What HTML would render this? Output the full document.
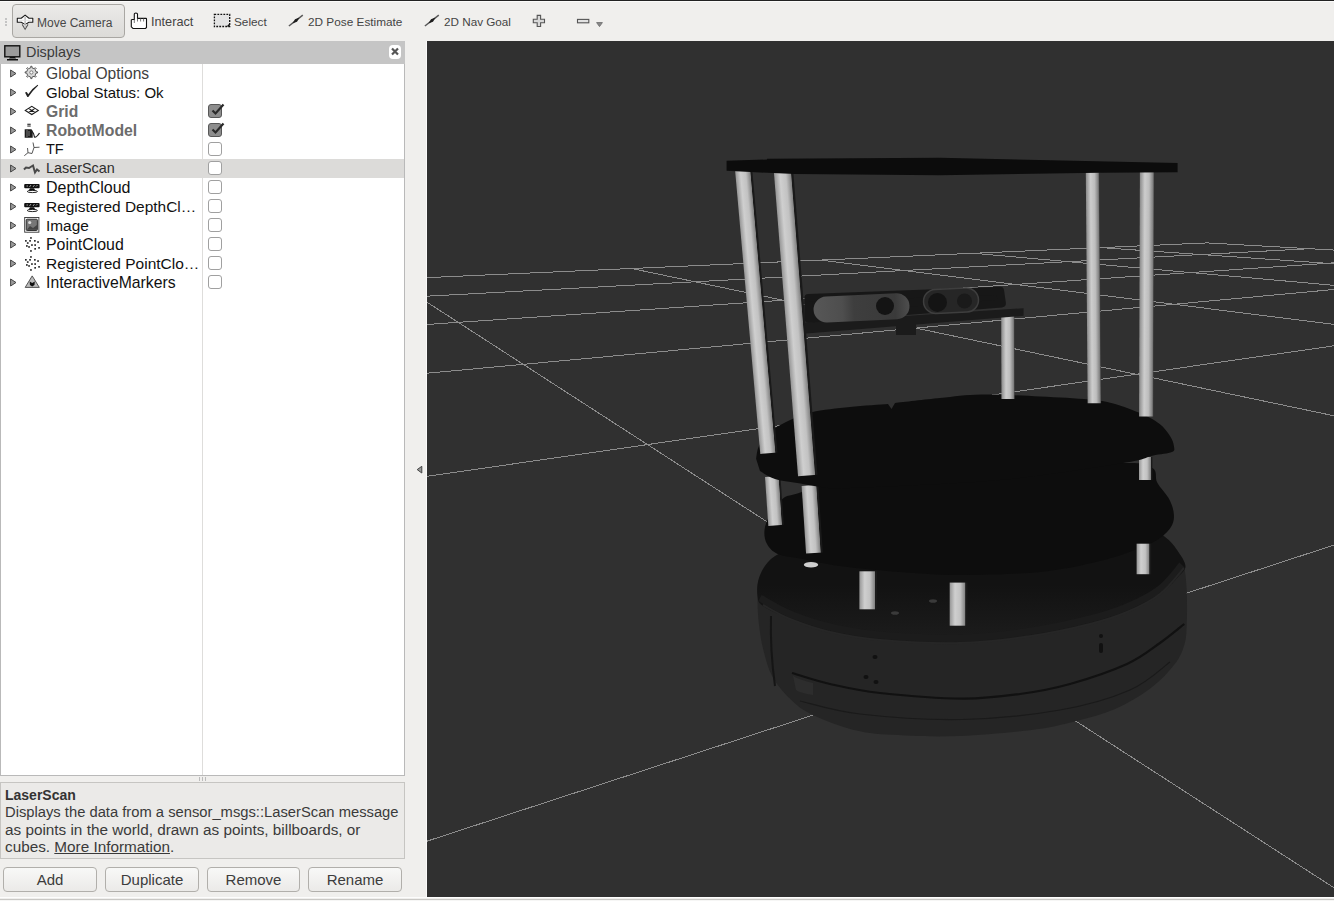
<!DOCTYPE html>
<html><head><meta charset="utf-8">
<style>
*{box-sizing:border-box;margin:0;padding:0}
html,body{width:1334px;height:901px;overflow:hidden;background:#f0efed;font-family:"Liberation Sans",sans-serif;color:#3c3c3c}
.abs{position:absolute}
#topline{left:0;top:0;width:1334px;height:1px;background:#222}
#topline2{left:0;top:1px;width:1334px;height:1px;background:#fbfbfa}
.tb{position:absolute;font-size:12px;color:#3c3c3c;white-space:nowrap;line-height:14px}
#mcbtn{left:12px;top:4px;width:113px;height:34px;border:1px solid #a9a7a3;border-radius:4px;background:linear-gradient(#ebeae8,#dcdbd8)}
#hdr{left:0;top:41px;width:405px;height:23px;background:#c5c5c5}
#tree{left:0;top:64px;width:405px;height:712px;background:#fff;border:1px solid #b9b9b9;border-top:none}
#coldiv{left:202px;top:64px;width:1px;height:711px;background:#dedddb}
.row{position:absolute;left:1px;width:403px;height:19px}
.lbl{position:absolute;left:45px;top:0.8px;font-size:15.2px;line-height:17px;color:#111;white-space:nowrap}
.arr{position:absolute;left:10px;top:5.5px;width:0;height:0;border-top:4px solid transparent;border-bottom:4px solid transparent;border-left:6.5px solid #555}
.cb{position:absolute;left:207px;top:2px;width:14px;height:14px;border:1px solid #a0a0a0;border-radius:3px;background:#fff}
.cb.on{background:#8d8d8d;border-color:#575757}
.ico{position:absolute;left:24px;top:2px;width:16px;height:16px}
.ico2{position:absolute;left:-1px;top:0}
#desc{left:0;top:782px;width:405px;height:77px;background:#ebeae8;border:1px solid #c6c5c2}
.dt{position:absolute;left:5px;font-size:14.75px;line-height:17px;color:#3a3a3a;white-space:nowrap}
.btn{position:absolute;top:867px;height:25px;border:1px solid #b1afab;border-radius:4px;background:linear-gradient(#f8f8f7,#ebeae8);font-size:15px;color:#3c3c3c;text-align:center;line-height:23px}
#view{left:427px;top:41px;width:907px;height:856px;background:#303030;overflow:hidden}
#status{left:0;top:897px;width:1334px;height:4px;background:#f0efed;border-top:1px solid #fdfdfd}
</style></head><body>
<div id="topline" class="abs"></div><div id="topline2" class="abs"></div>
<!-- toolbar -->
<div class="abs" style="left:5px;top:18px;width:2px;height:2px;background:#c4c4c4"></div>
<div class="abs" style="left:5px;top:21px;width:2px;height:2px;background:#c4c4c4"></div>
<div class="abs" style="left:5px;top:24px;width:2px;height:2px;background:#c4c4c4"></div>
<div id="mcbtn" class="abs"></div>
<svg class="abs" style="left:14px;top:10px" width="22" height="22" viewBox="14 10 22 22"><path d="M17.3 18.2 H21.2 L25.1 15.1 L29 18.2 H32.8 V22.3 H28.9 L25.1 24.6 L21.3 22.3 H17.3 Z" fill="#fff" stroke="#1a1a1a" stroke-width="1.1" stroke-linejoin="round"/><path d="M22.2 24.4 L25.1 29.2 L28 24.4" fill="#fff" stroke="#555" stroke-width="1.1"/><path d="M25.1 16.8 V27.5" stroke="#b0b0b0" stroke-width="1.2"/><path d="M18.8 20.25 H31.3" stroke="#e0e0e0" stroke-width="1"/></svg>
<div class="tb" style="left:37px;top:15.7px;color:#474747">Move Camera</div>
<svg class="abs" style="left:126px;top:8px" width="30" height="24" viewBox="0 0 30 24"><path d="M8.3 11.5 V6 Q8.3 5 9.9 5 Q11.5 5 11.5 6 V10.4 H20 Q20.5 10.4 20.5 11 V19.5 L19.5 20.5 H7 L5.3 18.8 V12 L6 11.5 Z" fill="#fff" stroke="#111" stroke-width="1.1"/><path d="M8.3 11.5 V15 M11.5 10.4 V13.5 M14.6 10.4 V13.5 M17.6 10.4 V13.5" stroke="#555" stroke-width="0.8"/></svg>
<div class="tb" style="left:151px;top:14.5px;font-size:12.7px;color:#444">Interact</div>
<svg class="abs" style="left:208px;top:8px" width="30" height="24" viewBox="0 0 30 24"><rect x="6.4" y="6.4" width="15.3" height="12.1" fill="#e4e4e4"/><rect x="6.4" y="6.4" width="15.3" height="12.1" fill="none" stroke="#111" stroke-width="1.3" stroke-dasharray="1.8 1.2"/><path d="M21.7 15.3 V18.5 H18.5 Z" fill="#111"/></svg>
<div class="tb" style="left:234px;top:15px;font-size:11.8px;color:#444">Select</div>
<svg class="abs" style="left:282px;top:6px" width="30" height="24" viewBox="0 0 30 24"><path d="M6.9 20 L20.8 9.1" stroke="#5a5a5a" stroke-width="1.5"/><path d="M17.6 11.6 L15.0 15.76 L10.4 17.4 L13.0 13.24 Z" fill="#1e1e1e"/></svg>
<div class="tb" style="left:308px;top:15px;font-size:11.8px;color:#444">2D Pose Estimate</div>
<svg class="abs" style="left:418px;top:6px" width="30" height="24" viewBox="0 0 30 24"><path d="M6.9 20 L20.8 9.1" stroke="#5a5a5a" stroke-width="1.5"/><path d="M17.6 11.6 L15.0 15.76 L10.4 17.4 L13.0 13.24 Z" fill="#1e1e1e"/></svg>
<div class="tb" style="left:444px;top:15px;font-size:11.7px;color:#444">2D Nav Goal</div>
<svg class="abs" style="left:526px;top:8px" width="84" height="24" viewBox="526 8 84 24"><path d="M537.2 15.4 H540.6 V19.3 H544.5 V22.7 H540.6 V26.5 H537.2 V22.7 H533.3 V19.3 H537.2 Z" fill="#d8d8d8" stroke="#555" stroke-width="1.1"/><rect x="577.5" y="19.4" width="11.3" height="3.4" fill="#e2e2e2" stroke="#555" stroke-width="1.1"/><path d="M596.6 22.6 H602.4 L599.5 26.6 Z" fill="#8a8a8a" stroke="#666" stroke-width="0.8"/></svg>
<!-- displays panel -->
<div id="hdr" class="abs"></div>
<svg class="abs" style="left:4px;top:45px" width="17" height="16" viewBox="0 0 17 16"><rect x="0.8" y="0.8" width="15" height="11" fill="#9b9b9b" stroke="#111" stroke-width="1.4"/><path d="M6 12 L11 12 L12 13.5 L5 13.5 Z" fill="#111"/><rect x="3" y="14" width="11" height="1.5" fill="#111"/></svg>
<div class="abs" style="left:26px;top:44px;font-size:14.4px;color:#3a3a3a;line-height:17px">Displays</div>
<div class="abs" style="left:389px;top:44.5px;width:12px;height:14px;background:#fff;border-radius:4px"></div>
<svg class="abs" style="left:389px;top:45px" width="12" height="13" viewBox="0 0 12 13"><path d="M3 3.5 L9 9.5 M9 3.5 L3 9.5" stroke="#555" stroke-width="2.2"/></svg>
<div id="tree" class="abs"></div>
<div id="coldiv" class="abs"></div>
<div class="row" style="top:64px;"><svg class="ico2" width="44" height="19" viewBox="0 0 44 19"><path d="M10.6 6 L16 9.5 L10.6 13 Z" fill="#9a9a9a" stroke="#454545" stroke-width="1" stroke-linejoin="round"/></svg><svg class="ico2" width="44" height="19" viewBox="0 0 44 19"><path d="M36.00,7.79 L37.52,7.87 L37.52,9.03 L36.00,9.11 L35.11,11.27 L36.13,12.40 L35.30,13.23 L34.17,12.21 L32.01,13.10 L31.93,14.62 L30.77,14.62 L30.69,13.10 L28.53,12.21 L27.40,13.23 L26.57,12.40 L27.59,11.27 L26.70,9.11 L25.18,9.03 L25.18,7.87 L26.70,7.79 L27.59,5.63 L26.57,4.50 L27.40,3.67 L28.53,4.69 L30.69,3.80 L30.77,2.28 L31.93,2.28 L32.01,3.80 L34.17,4.69 L35.30,3.67 L36.13,4.50 L35.11,5.63 Z" fill="#d9d9d9" stroke="#555" stroke-width="1"/><circle cx="31.35" cy="8.45" r="1.6" fill="#fff" stroke="#666" stroke-width="0.8"/></svg><div class="lbl" style="font-size:15.6px;color:#404040;">Global Options</div></div>
<div class="row" style="top:83px;"><svg class="ico2" width="44" height="19" viewBox="0 0 44 19"><path d="M10.6 6 L16 9.5 L10.6 13 Z" fill="#9a9a9a" stroke="#454545" stroke-width="1" stroke-linejoin="round"/></svg><svg class="ico2" width="44" height="19" viewBox="0 0 44 19"><path d="M25 9.6 L26.8 8.9 L28.2 11.2 Q32 5.5 37.6 1.8 L38.2 2.4 Q33 7 28.3 13.9 L27.3 13.9 Z" fill="#222"/></svg><div class="lbl" style="font-size:15.0px;">Global Status: Ok</div></div>
<div class="row" style="top:102px;"><svg class="ico2" width="44" height="19" viewBox="0 0 44 19"><path d="M10.6 6 L16 9.5 L10.6 13 Z" fill="#9a9a9a" stroke="#454545" stroke-width="1" stroke-linejoin="round"/></svg><svg class="ico2" width="44" height="19" viewBox="0 0 44 19"><path d="M25.3 8.4 L31.8 4.3 L38.3 8.4 L31.8 12.5 Z M28.55 6.35 L35.05 10.45 M35.05 6.35 L28.55 10.45" fill="none" stroke="#1a1a1a" stroke-width="1.1"/></svg><div class="lbl" style="font-size:15.7px;font-weight:bold;color:#6c6c6c;">Grid</div><div class="cb on"></div><svg style="position:absolute;left:208px;top:0px" width="16" height="16" viewBox="0 0 16 16"><path d="M3.5 8.5 L6.5 11.5 L14.5 2.5" fill="none" stroke="#2a2a2a" stroke-width="2.2"/></svg></div>
<div class="row" style="top:121px;"><svg class="ico2" width="44" height="19" viewBox="0 0 44 19"><path d="M10.6 6 L16 9.5 L10.6 13 Z" fill="#9a9a9a" stroke="#454545" stroke-width="1" stroke-linejoin="round"/></svg><svg class="ico2" width="44" height="19" viewBox="0 0 44 19"><rect x="27.3" y="2.7" width="3.4" height="1.2" fill="#333"/><rect x="27.3" y="4.5" width="3.4" height="1.1" fill="#333"/><path d="M24.7 8.3 H31.5 L32.7 10 V16.7 H24.7 Z" fill="#1a1a1a"/><path d="M27 9 V16 M29 10 V15" stroke="#888" stroke-width="0.9"/><path d="M31.5 10 Q34 12 34.5 16 Q36 17 39.5 12" fill="none" stroke="#222" stroke-width="1.3"/></svg><div class="lbl" style="font-size:15.8px;font-weight:bold;color:#6c6c6c;">RobotModel</div><div class="cb on"></div><svg style="position:absolute;left:208px;top:0px" width="16" height="16" viewBox="0 0 16 16"><path d="M3.5 8.5 L6.5 11.5 L14.5 2.5" fill="none" stroke="#2a2a2a" stroke-width="2.2"/></svg></div>
<div class="row" style="top:140px;"><svg class="ico2" width="44" height="19" viewBox="0 0 44 19"><path d="M10.6 6 L16 9.5 L10.6 13 Z" fill="#9a9a9a" stroke="#454545" stroke-width="1" stroke-linejoin="round"/></svg><svg class="ico2" width="44" height="19" viewBox="0 0 44 19"><path d="M24.3 15.7 L28 12.7 L27.5 8 M28 12.7 L32 13.5 L34 7.5 L39.5 7.2 M34 7.5 L33 2.5" fill="none" stroke="#444" stroke-width="0.9"/></svg><div class="lbl" style="font-size:14.5px;">TF</div><div class="cb"></div></div>
<div class="row" style="top:159px;background:#dcdbd9;"><svg class="ico2" width="44" height="19" viewBox="0 0 44 19"><path d="M10.6 6 L16 9.5 L10.6 13 Z" fill="#9a9a9a" stroke="#454545" stroke-width="1" stroke-linejoin="round"/></svg><svg class="ico2" width="44" height="19" viewBox="0 0 44 19"><path d="M24 10.5 L26 8.5 L29 9 L33 6.5 L35 13.5 L37 10.5 L39.5 12.5" fill="none" stroke="#4a4a4a" stroke-width="2"/></svg><div class="lbl" style="font-size:14.4px;color:#2e2e2e;">LaserScan</div><div class="cb"></div></div>
<div class="row" style="top:178px;"><svg class="ico2" width="44" height="19" viewBox="0 0 44 19"><path d="M10.6 6 L16 9.5 L10.6 13 Z" fill="#9a9a9a" stroke="#454545" stroke-width="1" stroke-linejoin="round"/></svg><svg class="ico2" width="44" height="19" viewBox="0 0 44 19"><rect x="24.2" y="6.1" width="15.4" height="4.2" rx="1" fill="#111"/><path d="M26.5 8 H28 M29.5 9 L31 7 M33 9 L34.5 7 M36 8.5 L37.5 7" stroke="#ddd" stroke-width="0.7"/><path d="M30 10.3 H34 L35.5 12.8 H28.5 Z" fill="#111"/><ellipse cx="32.35" cy="13.5" rx="5.1" ry="1.1" fill="#fff" stroke="#111" stroke-width="0.9"/></svg><div class="lbl" style="font-size:16.0px;">DepthCloud</div><div class="cb"></div></div>
<div class="row" style="top:197px;"><svg class="ico2" width="44" height="19" viewBox="0 0 44 19"><path d="M10.6 6 L16 9.5 L10.6 13 Z" fill="#9a9a9a" stroke="#454545" stroke-width="1" stroke-linejoin="round"/></svg><svg class="ico2" width="44" height="19" viewBox="0 0 44 19"><rect x="24.2" y="6.1" width="15.4" height="4.2" rx="1" fill="#111"/><path d="M26.5 8 H28 M29.5 9 L31 7 M33 9 L34.5 7 M36 8.5 L37.5 7" stroke="#ddd" stroke-width="0.7"/><path d="M30 10.3 H34 L35.5 12.8 H28.5 Z" fill="#111"/><ellipse cx="32.35" cy="13.5" rx="5.1" ry="1.1" fill="#fff" stroke="#111" stroke-width="0.9"/></svg><div class="lbl" style="font-size:15.44px;">Registered DepthCl…</div><div class="cb"></div></div>
<div class="row" style="top:216px;"><svg class="ico2" width="44" height="19" viewBox="0 0 44 19"><path d="M10.6 6 L16 9.5 L10.6 13 Z" fill="#9a9a9a" stroke="#454545" stroke-width="1" stroke-linejoin="round"/></svg><svg class="ico2" width="44" height="19" viewBox="0 0 44 19"><rect x="24.7" y="1.5" width="14.2" height="14.7" fill="#fff" stroke="#333" stroke-width="0.9"/><rect x="26.2" y="3.2" width="11.2" height="11.3" rx="1" fill="#777" stroke="#222" stroke-width="0.9"/><circle cx="29.7" cy="6.5" r="1.6" fill="#ddd"/><path d="M26.8 13.8 L30 10 L33 12 L37 9 V13.8 Z" fill="#444"/></svg><div class="lbl" style="font-size:15.4px;">Image</div><div class="cb"></div></div>
<div class="row" style="top:235px;"><svg class="ico2" width="44" height="19" viewBox="0 0 44 19"><path d="M10.6 6 L16 9.5 L10.6 13 Z" fill="#9a9a9a" stroke="#454545" stroke-width="1" stroke-linejoin="round"/></svg><svg class="ico2" width="44" height="19" viewBox="0 0 44 19"><g fill="#2e2e2e"><rect x="30.1" y="2.1" width="1.7" height="1.7"/><rect x="25.0" y="5.0" width="1.7" height="1.7"/><rect x="29.2" y="5.0" width="1.7" height="1.7"/><rect x="34.0" y="5.0" width="1.7" height="1.7"/><rect x="37.2" y="6.2" width="1.7" height="1.7"/><rect x="26.9" y="7.2" width="1.7" height="1.7"/><rect x="31.1" y="9.2" width="1.7" height="1.7"/><rect x="34.3" y="9.2" width="1.7" height="1.7"/><rect x="26.0" y="10.1" width="1.7" height="1.7"/><rect x="28.2" y="11.1" width="1.7" height="1.7"/><rect x="38.2" y="12.0" width="1.7" height="1.7"/><rect x="34.3" y="13.0" width="1.7" height="1.7"/><rect x="30.1" y="15.1" width="1.7" height="1.7"/></g></svg><div class="lbl" style="font-size:15.9px;">PointCloud</div><div class="cb"></div></div>
<div class="row" style="top:254px;"><svg class="ico2" width="44" height="19" viewBox="0 0 44 19"><path d="M10.6 6 L16 9.5 L10.6 13 Z" fill="#9a9a9a" stroke="#454545" stroke-width="1" stroke-linejoin="round"/></svg><svg class="ico2" width="44" height="19" viewBox="0 0 44 19"><g fill="#2e2e2e"><rect x="30.1" y="2.1" width="1.7" height="1.7"/><rect x="25.0" y="5.0" width="1.7" height="1.7"/><rect x="29.2" y="5.0" width="1.7" height="1.7"/><rect x="34.0" y="5.0" width="1.7" height="1.7"/><rect x="37.2" y="6.2" width="1.7" height="1.7"/><rect x="26.9" y="7.2" width="1.7" height="1.7"/><rect x="31.1" y="9.2" width="1.7" height="1.7"/><rect x="34.3" y="9.2" width="1.7" height="1.7"/><rect x="26.0" y="10.1" width="1.7" height="1.7"/><rect x="28.2" y="11.1" width="1.7" height="1.7"/><rect x="38.2" y="12.0" width="1.7" height="1.7"/><rect x="34.3" y="13.0" width="1.7" height="1.7"/><rect x="30.1" y="15.1" width="1.7" height="1.7"/></g></svg><div class="lbl" style="font-size:15.5px;">Registered PointClo…</div><div class="cb"></div></div>
<div class="row" style="top:273px;"><svg class="ico2" width="44" height="19" viewBox="0 0 44 19"><path d="M10.6 6 L16 9.5 L10.6 13 Z" fill="#9a9a9a" stroke="#454545" stroke-width="1" stroke-linejoin="round"/></svg><svg class="ico2" width="44" height="19" viewBox="0 0 44 19"><path d="M32.2 2.9 L39.3 14.4 L25.2 14.4 Z" fill="#bbb" stroke="#444" stroke-width="0.9"/><path d="M29.7 8.6 L32.2 10 L34.8 8.6 L34.5 12 L32.2 13.4 L29.9 12 Z" fill="#111"/></svg><div class="lbl" style="font-size:15.76px;">InteractiveMarkers</div><div class="cb"></div></div>
<div class="abs" style="left:199px;top:777px;width:1px;height:4px;background:#bbb"></div><div class="abs" style="left:202px;top:777px;width:1px;height:4px;background:#bbb"></div><div class="abs" style="left:205px;top:777px;width:1px;height:4px;background:#bbb"></div>
<div id="desc" class="abs"></div>
<div class="dt" style="top:787.4px;font-weight:bold;font-size:14px;color:#333">LaserScan</div>
<div class="dt" style="top:803.6px">Displays the data from a sensor_msgs::LaserScan message</div>
<div class="dt" style="top:820.6px;font-size:15.3px">as points in the world, drawn as points, billboards, or</div>
<div class="dt" style="top:837.6px;font-size:15.3px">cubes. <span style="text-decoration:underline">More Information</span>.</div>
<div class="btn" style="left:3px;width:94px">Add</div>
<div class="btn" style="left:105px;width:94px">Duplicate</div>
<div class="btn" style="left:207px;width:93px">Remove</div>
<div class="btn" style="left:308px;width:94px">Rename</div>
<svg class="abs" style="left:412px;top:462px" width="14" height="16" viewBox="412 462 14 16"><path d="M417.2 469.6 L421.8 466.3 L421.8 473 Z" fill="#999" stroke="#444" stroke-width="1"/></svg><div class="abs" style="left:426px;top:41px;width:1px;height:856px;background:#fafafa"></div>
<!-- 3d view -->
<div id="view" class="abs">
<svg width="907" height="856" viewBox="0 0 907 856" style="position:absolute;left:0;top:0">
<g stroke="#8c8c8c" stroke-width="1" fill="none" shape-rendering="crispEdges">
<line x1="780.0" y1="201.9" x2="-2.0" y2="236.7"/>
<line x1="780.0" y1="201.9" x2="909.0" y2="209.2"/>
<line x1="882.5" y1="207.7" x2="-2.0" y2="255.3"/>
<line x1="673.8" y1="206.6" x2="909.0" y2="222.9"/>
<line x1="909.0" y1="221.7" x2="-2.0" y2="283.6"/>
<line x1="547.3" y1="212.3" x2="909.0" y2="244.5"/>
<line x1="909.0" y1="248.3" x2="-2.0" y2="332.4"/>
<line x1="394.0" y1="219.1" x2="909.0" y2="283.6"/>
<line x1="909.0" y1="304.5" x2="-2.0" y2="435.6"/>
<line x1="204.6" y1="227.5" x2="909.0" y2="375.2"/>
<line x1="909.0" y1="503.4" x2="-2.0" y2="800.8"/>
<line x1="-2.0" y1="259.9" x2="909.0" y2="848.1"/>
</g>
<defs>
<linearGradient id="pole" x1="0" y1="0" x2="1" y2="0">
<stop offset="0" stop-color="#969696"/><stop offset="0.3" stop-color="#cfcfcf"/><stop offset="0.6" stop-color="#c2c2c2"/><stop offset="0.86" stop-color="#858585"/><stop offset="0.9" stop-color="#1a1a1a"/><stop offset="1" stop-color="#1a1a1a"/>
</linearGradient>
<linearGradient id="pole2" x1="0" y1="0" x2="1" y2="0">
<stop offset="0" stop-color="#8a8a8a"/><stop offset="0.35" stop-color="#cdcdcd"/><stop offset="0.65" stop-color="#bdbdbd"/><stop offset="0.92" stop-color="#808080"/><stop offset="1" stop-color="#444"/>
</linearGradient>
</defs>
<g transform="translate(-427,-41)">
<linearGradient id="topg" gradientUnits="userSpaceOnUse" x1="0" y1="585" x2="0" y2="640"><stop offset="0" stop-color="#121212"/><stop offset="1" stop-color="#1c1c1c"/></linearGradient>
<path fill="#252525" d="M790.0,548.0 C781.7,552.7 775.2,555.0 770.0,560.0 C764.8,565.0 761.1,571.3 759.0,578.0 C756.9,584.7 757.5,592.2 757.5,600.0 C757.5,607.8 758.0,616.8 759.0,625.0 C760.0,633.2 761.0,640.6 763.2,649.2 C765.4,657.8 767.8,668.1 772.3,676.5 C776.8,684.9 783.7,692.8 790.5,699.3 C797.3,705.8 801.9,709.9 813.3,715.2 C824.7,720.5 843.6,727.7 858.8,731.1 C874.0,734.5 887.4,734.7 904.3,735.5 C921.2,736.3 938.8,736.9 960.0,736.0 C981.2,735.1 1012.5,732.4 1031.6,730.0 C1050.7,727.6 1060.7,725.0 1074.6,721.5 C1088.5,718.0 1102.4,714.6 1115.1,709.0 C1127.8,703.4 1141.0,695.5 1150.9,688.0 C1160.9,680.5 1169.2,671.2 1174.8,664.0 C1180.4,656.8 1182.3,651.4 1184.3,645.0 C1186.3,638.6 1186.3,634.7 1186.7,625.5 C1187.1,616.3 1187.2,599.8 1186.7,590.0 C1186.2,580.2 1185.6,573.7 1184.0,567.0 C1182.4,560.3 1180.2,555.0 1177.0,550.0 C1173.8,545.0 1171.2,541.7 1165.0,537.0 C1158.8,532.3 1159.2,526.2 1140.0,522.0 C1120.8,517.8 1090.0,513.2 1050.0,512.0 C1010.0,510.8 938.3,511.7 900.0,515.0 C861.7,518.3 838.3,526.5 820.0,532.0 C801.7,537.5 798.3,543.3 790.0,548.0 Z"/>
<path fill="url(#topg)" d="M790.0,548.0 C781.7,552.7 775.2,555.0 770.0,560.0 C764.8,565.0 761.1,572.0 759.0,578.0 C756.9,584.0 756.8,591.3 757.5,596.0 C758.2,600.7 757.6,602.2 763.0,606.0 C768.4,609.8 778.8,614.7 790.0,619.0 C801.2,623.3 815.0,628.5 830.0,632.0 C845.0,635.5 858.3,638.2 880.0,640.0 C901.7,641.8 934.7,643.7 960.0,643.0 C985.3,642.3 1009.9,639.2 1031.6,636.0 C1053.3,632.8 1074.1,628.0 1090.0,624.0 C1105.9,620.0 1115.3,617.0 1127.0,612.0 C1138.7,607.0 1151.5,599.8 1160.0,594.0 C1168.5,588.2 1173.8,581.7 1178.0,577.0 C1182.2,572.3 1185.7,570.5 1185.5,566.0 C1185.3,561.5 1180.4,554.8 1177.0,550.0 C1173.6,545.2 1171.2,541.7 1165.0,537.0 C1158.8,532.3 1159.2,526.2 1140.0,522.0 C1120.8,517.8 1090.0,513.2 1050.0,512.0 C1010.0,510.8 938.3,511.7 900.0,515.0 C861.7,518.3 838.3,526.5 820.0,532.0 C801.7,537.5 798.3,543.3 790.0,548.0 Z"/>
<path fill="none" stroke="#1c1c1c" stroke-width="7" d="M760.0,598.0 C765.0,600.7 778.3,609.2 790.0,614.0 C801.7,618.8 815.0,623.5 830.0,627.0 C845.0,630.5 858.3,633.2 880.0,635.0 C901.7,636.8 934.7,638.7 960.0,638.0 C985.3,637.3 1009.9,634.2 1031.6,631.0 C1053.3,627.8 1074.1,623.0 1090.0,619.0 C1105.9,615.0 1115.3,612.0 1127.0,607.0 C1138.7,602.0 1150.8,596.0 1160.0,589.0 C1169.2,582.0 1178.3,569.0 1182.0,565.0 "/>
<path fill="none" stroke="#262626" stroke-width="2" d="M763.0,605.0 C767.5,607.3 778.8,614.5 790.0,619.0 C801.2,623.5 815.0,628.5 830.0,632.0 C845.0,635.5 858.3,638.2 880.0,640.0 C901.7,641.8 934.7,643.7 960.0,643.0 C985.3,642.3 1009.9,639.2 1031.6,636.0 C1053.3,632.8 1074.1,628.0 1090.0,624.0 C1105.9,620.0 1115.3,617.0 1127.0,612.0 C1138.7,607.0 1150.5,601.3 1160.0,594.0 C1169.5,586.7 1180.0,572.3 1184.0,568.0 "/>
<path fill="none" stroke="#111" stroke-width="2.2" d="M792.0,673.0 C798.3,674.8 815.3,680.7 830.0,684.0 C844.7,687.3 857.9,690.6 880.0,693.0 C902.1,695.4 939.4,698.4 962.7,698.6 C986.0,698.8 1002.1,696.4 1020.0,694.0 C1037.9,691.6 1052.2,689.0 1070.0,684.0 C1087.8,679.0 1112.0,670.8 1127.0,664.0 C1142.0,657.2 1150.5,649.7 1160.0,643.0 C1169.5,636.3 1180.2,627.2 1184.3,624.0 "/>
<path fill="none" stroke="#1a1a1a" stroke-width="1.2" d="M800.0,701.0 C810.0,703.2 833.0,710.9 860.0,714.0 C887.0,717.1 928.7,720.2 962.0,719.5 C995.3,718.8 1032.0,714.9 1060.0,710.0 C1088.0,705.1 1111.7,698.0 1130.0,690.0 C1148.3,682.0 1163.3,666.7 1170.0,662.0 "/>
<path fill="none" stroke="#151515" stroke-width="2" d="M771,616 Q770,650 775,686"/>
<path fill="#2d2d2d" d="M793,676 Q800,680 813,683 L813,695 Q800,693 796,690 Z"/>
<ellipse cx="1101" cy="636" rx="2" ry="2" fill="#111"/><rect x="1099" y="643" width="4" height="10" rx="2" fill="#111"/>
<ellipse cx="875" cy="657" rx="2.5" ry="2" fill="#111"/><ellipse cx="866" cy="677" rx="2.5" ry="2" fill="#111"/><ellipse cx="876" cy="682" rx="2.5" ry="2" fill="#111"/>
<ellipse cx="895" cy="613" rx="4" ry="1.8" fill="#3a3a3a"/><ellipse cx="933" cy="601" rx="4" ry="1.8" fill="#3a3a3a"/>
<path fill="#0d0d0d" d="M798.3,493.2 C787.1,496.3 787.4,495.1 782.7,498.7 C778.0,502.3 773.0,509.8 770.0,515.0 C767.0,520.2 765.0,525.2 764.5,530.0 C764.0,534.8 764.7,540.0 767.0,544.0 C769.3,548.0 772.3,551.7 778.3,554.2 C784.2,556.7 792.4,557.0 802.7,559.0 C813.0,561.0 823.8,563.8 840.0,566.0 C856.2,568.2 880.0,570.5 900.0,572.0 C920.0,573.5 936.7,575.0 960.0,575.0 C983.3,575.0 1016.7,574.3 1040.0,572.0 C1063.3,569.7 1083.3,565.0 1100.0,561.0 C1116.7,557.0 1130.0,551.8 1140.0,548.0 C1150.0,544.2 1154.8,541.5 1160.0,538.0 C1165.2,534.5 1168.7,530.8 1171.0,527.0 C1173.3,523.2 1174.2,519.5 1173.9,515.0 C1173.7,510.4 1172.3,505.1 1169.5,499.7 C1166.7,494.3 1160.0,487.9 1157.2,482.6 C1154.4,477.3 1158.1,471.3 1152.4,468.0 C1146.7,464.7 1148.4,462.7 1123.0,463.0 C1097.6,463.3 1045.5,467.2 1000.0,470.0 C954.5,472.8 883.6,476.1 850.0,480.0 C816.4,483.9 809.5,490.1 798.3,493.2 Z"/>
<rect transform="translate(868.2,571.3) rotate(-0.00)" x="-8.8" y="0" width="17.6" height="38.0" fill="url(#pole)"/>
<rect transform="translate(958.5,582.6) rotate(-0.00)" x="-8.8" y="0" width="17.7" height="43.1" fill="url(#pole)"/>
<rect transform="translate(1143.8,543.7) rotate(-0.00)" x="-7.2" y="0" width="14.5" height="30.5" fill="url(#pole)"/>
<rect transform="translate(772.8,476.5) rotate(-3.86)" x="-7.8" y="0" width="15.5" height="49.0" fill="url(#pole)"/>
<rect transform="translate(809.9,485.4) rotate(-3.76)" x="-8.3" y="0" width="16.7" height="67.8" fill="url(#pole)"/>
<rect transform="translate(1145.7,457.0) rotate(-0.00)" x="-6.7" y="0" width="13.4" height="23.0" fill="url(#pole)"/>
<ellipse cx="811" cy="564.8" rx="7.2" ry="2.8" fill="#cfcfcf"/>
<path fill="#0d0d0d" d="M756.1,458.8 C756.6,456.7 756.7,450.5 759.0,446.0 C761.3,441.5 765.5,436.0 770.0,432.0 C774.5,428.0 779.1,425.3 786.0,422.0 C792.9,418.7 800.9,414.7 811.6,412.2 C822.3,409.7 837.3,408.4 850.0,407.0 C862.7,405.6 881.7,404.5 888.0,404.0  L891.5,409 895.0,403.0 C902.5,402.2 925.6,399.4 940.0,398.0 C954.4,396.6 964.7,394.8 981.4,394.5 C998.1,394.2 1022.1,395.7 1040.0,396.5 C1057.9,397.3 1076.7,398.3 1088.9,399.5 C1101.1,400.7 1104.3,401.1 1113.3,403.5 C1122.2,405.9 1134.9,410.8 1142.6,414.2 C1150.3,417.6 1155.1,420.4 1159.7,424.0 C1164.3,427.6 1167.6,432.3 1170.0,436.0 C1172.4,439.7 1173.6,443.3 1173.9,446.0 C1174.2,448.7 1175.5,450.4 1171.9,452.0 C1168.3,453.6 1160.6,453.9 1152.4,455.7 C1144.2,457.5 1148.4,458.9 1123.0,463.0 C1097.6,467.1 1045.5,475.8 1000.0,480.0 C954.5,484.2 879.2,486.7 850.0,488.0 C820.8,489.3 833.1,488.4 824.9,487.6 C816.6,486.9 808.8,484.9 800.5,483.5 C792.2,482.1 781.8,481.1 775.0,479.0 C768.2,476.9 762.5,472.3 760.0,471.0  Z"/>
<rect transform="translate(1092.5,172.0) rotate(-0.46)" x="-6.7" y="0" width="13.4" height="231.2" fill="url(#pole2)"/>
<rect transform="translate(1147.0,172.0) rotate(0.19)" x="-7.1" y="0" width="14.2" height="244.6" fill="url(#pole2)"/>
<rect transform="translate(1007.8,314.0) rotate(-0.17)" x="-6.6" y="0" width="13.2" height="85.0" fill="url(#pole2)"/>
<!-- camera -->
<path fill="#1b1b1b" d="M788,323.8 L1023.6,308.2 L1023.6,315.8 L788,335 Z"/>
<rect x="896" y="324" width="20" height="11" fill="#1b1b1b"/>
<path fill="#171717" stroke="#171717" stroke-width="8" stroke-linejoin="round" d="M808.4,297.9 L1000.1,290.7 L1001.9,303.4 L808.4,318.7 Z"/>
<linearGradient id="capg" x1="0" y1="0" x2="1" y2="0"><stop offset="0" stop-color="#575757"/><stop offset="0.3" stop-color="#4e4e4e"/><stop offset="0.42" stop-color="#3e3e3e"/><stop offset="0.85" stop-color="#3a3a3a"/><stop offset="1" stop-color="#4e4e4e"/></linearGradient><rect transform="translate(813,297) rotate(-2.6)" x="0" y="0" width="96" height="26" rx="13" fill="url(#capg)"/>
<rect transform="translate(923,290) rotate(-2.6)" x="0" y="0" width="55" height="24" rx="12" fill="#262626" stroke="#3e3e3e" stroke-width="1.5"/>
<circle cx="885" cy="306" r="9" fill="#141414"/>
<circle cx="937.5" cy="302.4" r="9.5" fill="#141414"/>
<circle cx="964.5" cy="301" r="7.5" fill="#1a1a1a"/>
<rect transform="translate(743.5,168.0) rotate(-5.08)" x="-8.6" y="0" width="17.2" height="286.3" fill="url(#pole)"/>
<rect transform="translate(783.3,168.0) rotate(-4.54)" x="-9.7" y="0" width="19.4" height="308.4" fill="url(#pole)"/>
<!-- top plate -->
<path fill="#0c0c0c" d="M726.6,160.8 L767,159.5 L767,158.8 L940,157.8 L1177.6,162.9 L1177.6,172.2 L1100,172.8 L940,175.2 L795,174 L760,172.5 L726.6,170.7 Z"/>
</g>

</svg>
</div>
<div id="status" class="abs"></div><div class="abs" style="left:0;top:899px;width:1334px;height:1px;background:#c9c8c5"></div><div class="abs" style="left:0;top:900px;width:1334px;height:1px;background:#f6f6f5"></div>
</body></html>
